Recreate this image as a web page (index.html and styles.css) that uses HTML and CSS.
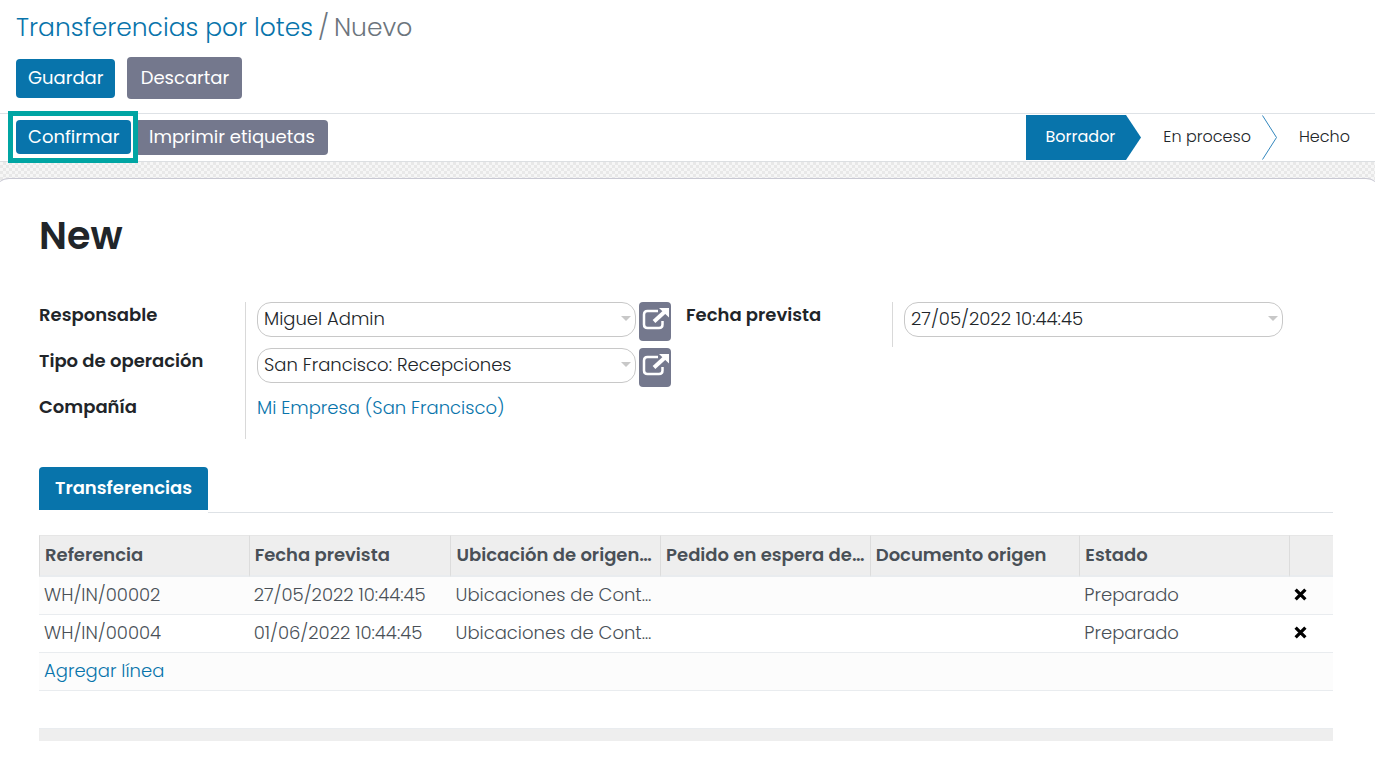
FILE: index.html
```html
<!DOCTYPE html>
<html lang="es">
<head>
<meta charset="utf-8">
<meta name="viewport" content="width=device-width, initial-scale=1">
<title>Transferencias por lotes</title>
<link rel="stylesheet" href="styles.css">
</head>
<body>
<header class="control-panel">
  <nav class="breadcrumb" aria-label="Ruta">
    <a href="#">Transferencias por lotes</a>
    <span>/</span>
    <span>Nuevo</span>
  </nav>
  <div class="actions">
    <button class="btn btn-primary btn-save" type="button">Guardar</button>
    <button class="btn btn-secondary btn-discard" type="button">Descartar</button>
  </div>
</header>
<div class="statusbar">
  <div class="status-buttons">
    <button class="btn btn-primary btn-confirm" type="button">Confirmar</button>
    <button class="btn btn-secondary btn-print" type="button">Imprimir etiquetas</button>
  </div>
  <div class="stages">
    <button class="stage stage-current" type="button" aria-current="step">Borrador</button>
    <svg class="stage-tip" viewBox="0 0 15 45" aria-hidden="true"><path d="M0 0L15 22.500L0 45Z" fill="#0874ab"/></svg>
    <button class="stage" type="button">En proceso</button>
    <svg class="stage-tip" viewBox="0 0 15 45" aria-hidden="true"><path d="M0.500 0.500L14.500 22.500L0.500 44.500" fill="none" stroke="#3287bd"/></svg>
    <button class="stage stage-last" type="button">Hecho</button>
  </div>
</div>
<main class="content">
  <form class="sheet">
    <h1 class="title">New</h1>
    <div class="groups">
      <div class="group">
        <div class="labels">
          <label for="user">Responsable</label>
          <label for="type">Tipo de operación</label>
          <span class="label">Compañía</span>
        </div>
        <div class="fields">
          <div class="field">
            <div class="control"><select class="input" id="user"><option>Miguel Admin</option></select></div>
            <button class="btn-external" type="button" aria-label="Abrir responsable"><svg viewBox="0 0 28 24" aria-hidden="true"><path class="box" d="M16 4H5.500Q2 4 2 7.500V17.500Q2 21 5.500 21H17Q20.500 21 20.500 17.500V14"/><path class="shaft" d="M12 14.500L23 4.500"/><path class="head" d="M17 1H27V10.500Z"/></svg></button>
          </div>
          <div class="field">
            <div class="control"><select class="input" id="type"><option>San Francisco: Recepciones</option></select></div>
            <button class="btn-external" type="button" aria-label="Abrir tipo de operación"><svg viewBox="0 0 28 24" aria-hidden="true"><path class="box" d="M16 4H5.500Q2 4 2 7.500V17.500Q2 21 5.500 21H17Q20.500 21 20.500 17.500V14"/><path class="shaft" d="M12 14.500L23 4.500"/><path class="head" d="M17 1H27V10.500Z"/></svg></button>
          </div>
          <a class="company" href="#">Mi Empresa (San Francisco)</a>
        </div>
      </div>
      <div class="group">
        <div class="labels"><label for="date">Fecha prevista</label></div>
        <div class="fields fields-date">
          <div class="control"><input class="input" id="date" type="text" value="27/05/2022 10:44:45"></div>
        </div>
      </div>
    </div>
    <div class="tabs"><button class="tab" type="button">Transferencias</button></div>
    <table class="list">
      <colgroup><col class="c-main"><col class="c-date"><col class="c-main"><col class="c-main"><col class="c-main"><col class="c-main"><col></colgroup>
      <thead>
        <tr><th>Referencia</th><th>Fecha prevista</th><th>Ubicación de origen…</th><th>Pedido en espera de…</th><th>Documento origen</th><th>Estado</th><th></th></tr>
      </thead>
      <tbody>
        <tr><td>WH/IN/00002</td><td>27/05/2022 10:44:45</td><td>Ubicaciones de Cont…</td><td></td><td></td><td>Preparado</td><td><button class="remove" type="button" aria-label="Eliminar WH/IN/00002"><svg viewBox="0 0 12 12" aria-hidden="true"><path d="M1.500 1.500L10.500 10.500M10.500 1.500L1.500 10.500"/></svg></button></td></tr>
        <tr><td>WH/IN/00004</td><td>01/06/2022 10:44:45</td><td>Ubicaciones de Cont…</td><td></td><td></td><td>Preparado</td><td><button class="remove" type="button" aria-label="Eliminar WH/IN/00004"><svg viewBox="0 0 12 12" aria-hidden="true"><path d="M1.500 1.500L10.500 10.500M10.500 1.500L1.500 10.500"/></svg></button></td></tr>
        <tr><td colspan="7"><a href="#">Agregar línea</a></td></tr>
      </tbody>
      <tfoot>
        <tr class="spacer"><td colspan="7"></td></tr>
        <tr class="footer"><td colspan="7"></td></tr>
      </tfoot>
    </table>
  </form>
</main>
</body>
</html>
```
FILE: styles.css
```css
* { box-sizing: border-box; }

body {
  margin: 0;
  background: #fff;
  color: #212529;
  font-family: Poppins, Inter, "Open Sans", sans-serif;
  font-size: 18px;
  font-weight: 300;
  line-height: 28px;
}

a { color: #0874ab; text-decoration: none; }
button, input, select { font: inherit; color: inherit; margin: 0; }
button { border: 0; cursor: pointer; }

.control-panel { padding: 8px 16px 14px; }

.breadcrumb {
  display: flex;
  gap: 5px;
  color: #6c757d;
  font-size: 25px;
  line-height: 40px;
}

.actions { display: flex; align-items: center; gap: 12px; margin-top: 9px; }

.btn { border-radius: 4px; color: #fff; font-weight: 400; white-space: nowrap; padding: 0 12px; }
.btn-primary { background: #0874ab; }
.btn-secondary { background: #74788d; }
.btn-save { height: 39px; min-width: 99px; }
.btn-discard { height: 42px; min-width: 115px; }

.statusbar {
  display: flex;
  justify-content: space-between;
  align-items: center;
  height: 49px;
  padding-left: 16px;
  border-top: 1px solid #dee2e6;
  border-bottom: 1px solid #dcdfe2;
}
.status-buttons { display: flex; gap: 4px; }
.btn-confirm { position: relative; height: 34px; min-width: 115px; }
.btn-confirm::after {
  content: "";
  position: absolute;
  inset: -9px -7px -9px -8px;
  border: 5px solid #00a5a3;
}
.btn-print { height: 35px; min-width: 193px; padding-bottom: 2px; }

.stages { display: flex; height: 45px; }
.stage {
  background: none;
  padding: 0 11px 2px 22px;
  font-size: 16px;
  font-weight: 300;
  white-space: nowrap;
}
.stage-current { padding: 0 11px 2px 20px; background: #0874ab; color: #fff; font-weight: 400; }
.stage-last { padding-right: 25px; }
.stage-tip { width: 15px; height: 45px; }

.content {
  overflow: hidden;
  padding-top: 16px;
  background: repeating-conic-gradient(#e8e8e8 0 25%, #f6f6f6 0 50%) 0 0 / 6px 6px;
}
.sheet {
  min-height: 579px;
  margin: 0 -5px;
  padding: 32px 47px 16px 44px;
  border-top: 1px solid #c8c8d3;
  border-radius: 14px 14px 0 0;
  background: #fff;
}

.title { margin: 0; font-size: 38px; font-weight: 600; line-height: 50px; }

.groups { display: grid; grid-template-columns: 1fr 1fr; align-items: start; margin-top: 41px; }
.group { display: grid; grid-template-columns: 206px 1fr; }
.labels { display: grid; align-content: start; gap: 20px; font-weight: 600; line-height: 26px; }
.fields {
  display: flex;
  flex-direction: column;
  gap: 7px;
  min-height: 45px;
  padding: 0 15px 17px 11px;
  border-left: 1px solid #d9d9d9;
}
.fields-date { padding: 0 50px 10px 11px; }
.field { display: flex; align-items: flex-start; gap: 3px; }

.control { position: relative; flex: 1; }
.control::after {
  content: "";
  position: absolute;
  top: 14px;
  right: 5px;
  border: 5px solid transparent;
  border-top-color: #c8c8c8;
  border-bottom: 0;
}
.input {
  display: block;
  width: 100%;
  height: 35px;
  padding: 0 18px 2px 6px;
  border: 1px solid #c8c8c8;
  border-radius: 14px;
  background: #fff;
  appearance: none;
}
.btn-external {
  display: flex;
  width: 32px;
  height: 39px;
  padding: 5px 1px 0 3px;
  border-radius: 4px;
  background: #74788d;
}
.btn-external svg { width: 28px; height: 24px; fill: none; stroke: #fff; }
.btn-external .box { stroke-width: 2.500; }
.btn-external .shaft { stroke-width: 4; }
.btn-external .head { fill: #fff; stroke: none; }

.tabs { display: flex; height: 46px; margin-top: 28px; }
.tabs::after { content: ""; flex: 1; border-bottom: 1px solid #dee2e6; }
.tab {
  height: 43px;
  min-width: 169px;
  padding: 0 16px 2px;
  border-radius: 4px 4px 0 0;
  background: #0874ab;
  color: #fff;
  font-weight: 600;
}

.list {
  width: 100%;
  margin-top: 22px;
  border-collapse: separate;
  border-spacing: 0;
  table-layout: fixed;
  color: #495057;
}
.c-main { width: 16.2%; }
.c-date { width: 15.6%; }
.list th {
  height: 42px;
  padding: 0 0 1px 5px;
  border-top: 1px solid #e6e6e6;
  border-left: 1px solid #dcdcdc;
  border-bottom: 2px solid #e9ecef;
  background: #eee;
  font-weight: 600;
  text-align: left;
  white-space: nowrap;
}
.list td { height: 38px; padding: 0 5px 2px; border-bottom: 1px solid #e9ecef; white-space: nowrap; }
.list tbody tr:nth-child(odd) { background: #fcfcfc; }
.remove { display: flex; padding: 0; background: none; }
.remove svg { width: 13px; height: 13px; stroke: #000; stroke-width: 3; }
.list .spacer td { height: 38px; }
.list .footer td { height: 12px; padding: 0; background: #eee; border: 0; }
```
